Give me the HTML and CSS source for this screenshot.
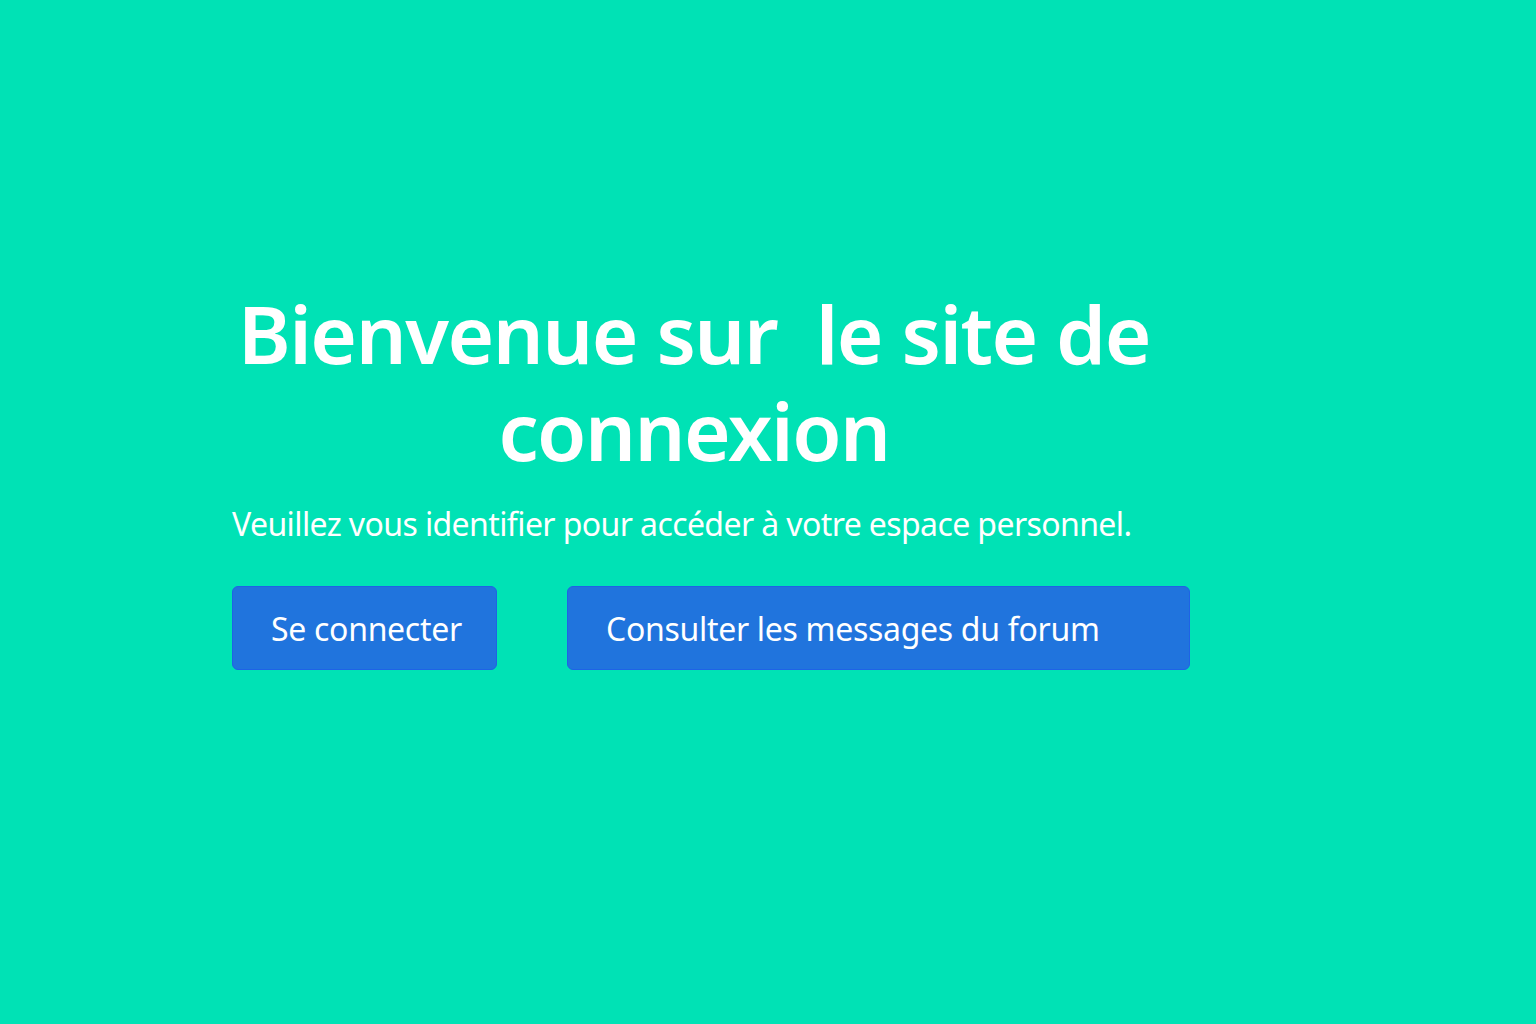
FILE: index.html
```html
<!DOCTYPE html>
<html lang="fr">
<head>
  <meta charset="UTF-8" />
  <meta name="viewport" content="width=device-width, initial-scale=1.0" />
  <title>Connexion</title>
  <link rel="stylesheet" href="styles.css">
</head>
<body>
  <main class="welcome">
    <h1>Bienvenue sur &nbsp;le site de<br>connexion</h1>
    <p class="lead">Veuillez vous identifier pour accéder à votre espace personnel.</p>
    <div class="actions">
      <a class="btn btn-login" href="#">Se connecter</a>
      <a class="btn btn-forum" href="#">Consulter les messages du forum</a>
    </div>
  </main>
</body>
</html>
```

FILE: styles.css
```css
html, body {
  height: 100%;
}

body {
  margin: 0;
  background: #00e2b5;
  color: #fff;
  font-family: 'Noto Sans', 'Open Sans', sans-serif;
}

.welcome {
  padding: 284px 0 0 232px;
  width: 924px;
}

.welcome h1 {
  margin: 0;
  font-size: 80px;
  font-weight: 600;
  letter-spacing: -1.5px;
  line-height: 97px;
  text-align: center;
  white-space: nowrap;
}

.lead {
  margin: 24px 0 0;
  font-size: 32px;
  letter-spacing: -0.6px;
  line-height: 44px;
  white-space: nowrap;
}

.actions {
  display: flex;
  gap: 70px;
  margin-top: 40px;
}

.btn {
  display: flex;
  align-items: center;
  flex-shrink: 0;
  box-sizing: border-box;
  height: 84px;
  padding: 0 38px;
  background: #2074dd;
  border: 1px solid #1f62e6;
  border-radius: 6px;
  color: #fff;
  font-size: 32px;
  letter-spacing: -0.3px;
  text-decoration: none;
  white-space: nowrap;
}

.btn-login {
  width: 265px;
}

.btn-forum {
  width: 623px;
}
```
